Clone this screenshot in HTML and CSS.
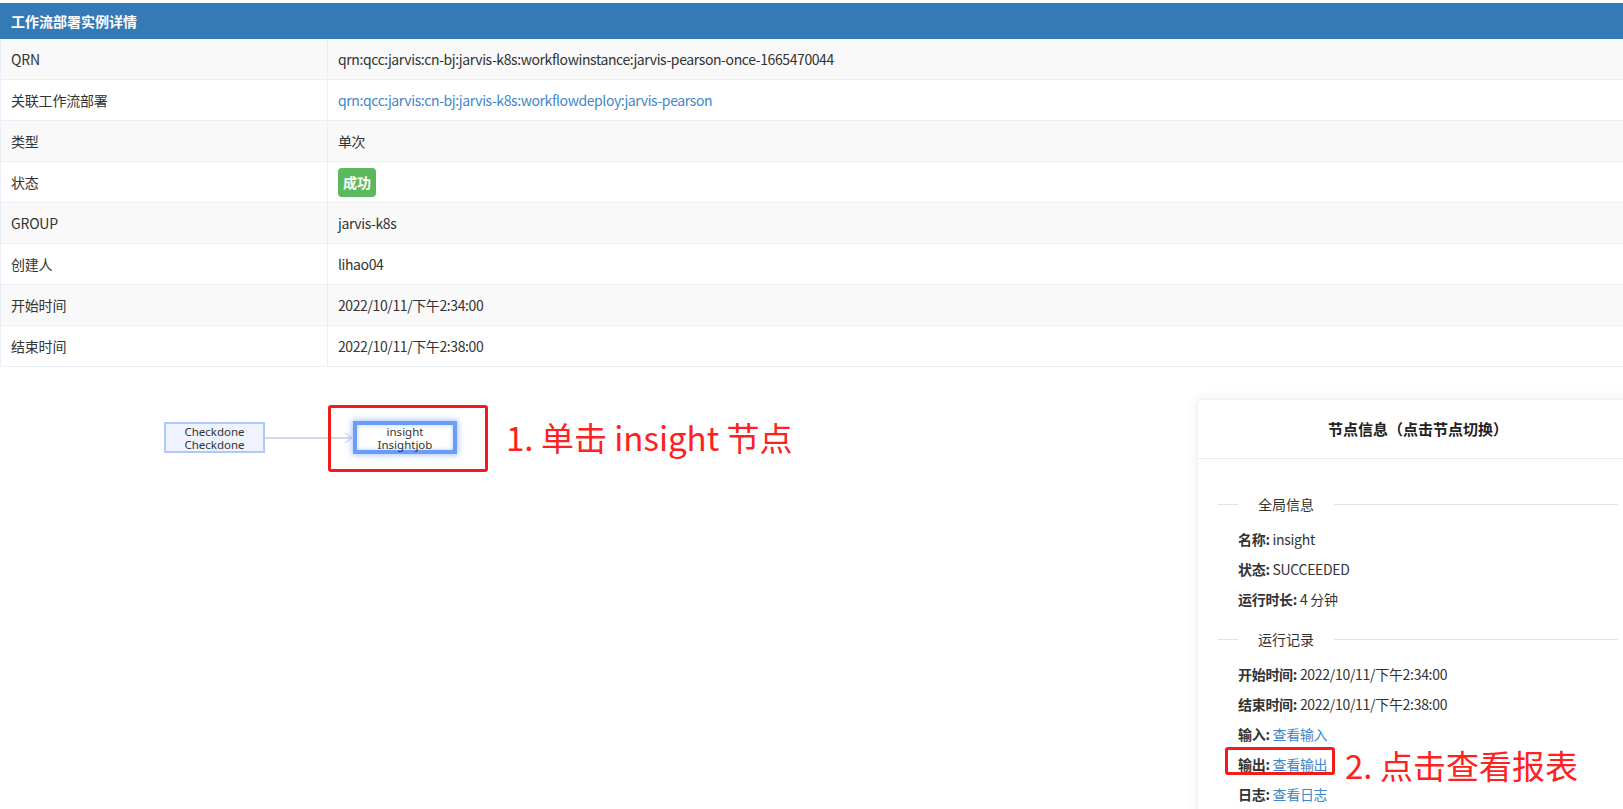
FILE: index.html
```html
<!DOCTYPE html>
<html lang="zh-CN">
<head>
<meta charset="utf-8">
<title>工作流部署实例详情</title>
<link rel="stylesheet" href="styles.css">
</head>
<body>
<div class="panel">
  <div class="panel-heading">工作流部署实例详情</div>
  <div class="detail">
    <div class="row odd"><div class="label">QRN</div><div class="value">qrn:qcc:jarvis:cn-bj:jarvis-k8s:workflowinstance:jarvis-pearson-once-1665470044</div></div>
    <div class="row"><div class="label">关联工作流部署</div><div class="value"><a class="link" href="#">qrn:qcc:jarvis:cn-bj:jarvis-k8s:workflowdeploy:jarvis-pearson</a></div></div>
    <div class="row odd"><div class="label">类型</div><div class="value">单次</div></div>
    <div class="row"><div class="label">状态</div><div class="value"><span class="badge">成功</span></div></div>
    <div class="row odd"><div class="label">GROUP</div><div class="value">jarvis-k8s</div></div>
    <div class="row"><div class="label">创建人</div><div class="value">lihao04</div></div>
    <div class="row odd"><div class="label">开始时间</div><div class="value">2022/10/11/下午2:34:00</div></div>
    <div class="row"><div class="label">结束时间</div><div class="value">2022/10/11/下午2:38:00</div></div>
  </div>
</div>

<div class="lower">
  <div class="graph">
    <svg class="edge" width="100" height="20" viewBox="0 0 100 20">
      <line x1="0" y1="10" x2="87" y2="10" stroke="#d3d9e6" stroke-width="2"/>
      <polyline points="80,5 87,10 80,15" fill="none" stroke="#d3d9e6" stroke-width="1.5"/>
    </svg>
    <div class="node node-check"><span class="node-line">Checkdone</span><span class="node-line">Checkdone</span></div>
    <div class="node node-insight"><span class="node-line">insight</span><span class="node-line">Insightjob</span></div>
    <div class="anno-box anno-box-1"></div>
    <div class="anno-text anno-text-1">1. 单击 insight 节点</div>
  </div>

  <div class="card">
    <div class="card-head">节点信息（点击节点切换）</div>
    <div class="card-body">
      <div class="divider"><span class="divider-text">全局信息</span></div>
      <div class="item"><b>名称:</b> insight</div>
      <div class="item"><b>状态:</b> SUCCEEDED</div>
      <div class="item"><b>运行时长:</b> 4 分钟</div>
      <div class="divider divider-second"><span class="divider-text">运行记录</span></div>
      <div class="item"><b>开始时间:</b> 2022/10/11/下午2:34:00</div>
      <div class="item"><b>结束时间:</b> 2022/10/11/下午2:38:00</div>
      <div class="item"><b>输入:</b> <a class="link" href="#">查看输入</a></div>
      <div class="item item-anno"><b>输出:</b> <a class="link" href="#">查看输出</a>
        <div class="anno-box anno-box-2"></div>
        <div class="anno-text anno-text-2">2. 点击查看报表</div>
      </div>
      <div class="item"><b>日志:</b> <a class="link" href="#">查看日志</a></div>
      <div class="item">&nbsp;</div>
    </div>
  </div>
</div>
</body>
</html>
```

FILE: styles.css
```css
html, body {
  margin: 0;
  padding: 0;
  overflow: hidden;
  background: #ffffff;
}
body {
  font-family: "Noto Sans CJK SC", "Noto Sans", sans-serif;
  font-size: 14px;
  color: #333333;
  height: 809px;
}
.panel {
  margin-top: 3px;
}
.panel-heading {
  height: 36px;
  line-height: 36px;
  background: #337ab7;
  color: #ffffff;
  font-weight: bold;
  font-size: 14px;
  padding-left: 11px;
}
.detail {
  border-left: 1px solid #eceef5;
}
.row {
  display: grid;
  grid-template-columns: 327px 1fr;
  height: 40px;
  border-bottom: 1px solid #eceef5;
  background: #ffffff;
}
.row.odd {
  background: #f9f9f9;
}
.label {
  border-right: 1px solid #eceef5;
  padding-left: 10px;
  display: flex;
  align-items: center;
  letter-spacing: -0.2px;
}
.value {
  padding-left: 10px;
  display: flex;
  align-items: center;
  letter-spacing: -0.4px;
}
.link {
  color: #3f86cc;
  text-decoration: none;
}
.badge {
  display: inline-block;
  height: 29px;
  line-height: 29px;
  padding: 0 5px;
  border-radius: 4px;
  background: #5cb85c;
  color: #ffffff;
  font-weight: bold;
  letter-spacing: 0;
}

.lower {
  display: flex;
  margin-right: -16px;
  align-items: flex-start;
}
.graph {
  flex: 1;
  position: relative;
  height: 442px;
}
.node {
  position: absolute;
  box-sizing: border-box;
  text-align: center;
  font-family: "Noto Sans", "Open Sans", sans-serif;
  font-size: 11.5px;
  color: #333333;
  display: flex;
  flex-direction: column;
  align-items: center;
  justify-content: center;
}
.node-line {
  display: block;
  height: 13px;
  line-height: 13px;
}
.node-check {
  left: 164px;
  top: 55px;
  width: 101px;
  height: 31px;
  background: #eef3fe;
  border: 2px solid #adc8fb;
}
.node-insight {
  left: 353px;
  top: 54px;
  width: 104px;
  height: 33px;
  background: #ffffff;
  border: 4px solid #6b9cf9;
  box-shadow: 0 0 6px 1px rgba(107, 156, 249, 0.6), inset 0 0 4px rgba(107, 156, 249, 0.5);
}
.edge {
  position: absolute;
  left: 265px;
  top: 61px;
}
.anno-box {
  position: absolute;
  box-sizing: border-box;
  border: 3px solid #f01d1b;
  border-radius: 3px;
}
.anno-box-1 {
  left: 328px;
  top: 38px;
  width: 160px;
  height: 67px;
}
.anno-text {
  position: absolute;
  color: #ff2121;
  font-size: 33px;
  line-height: 38px;
  white-space: nowrap;
}
.anno-text-1 {
  left: 506px;
  top: 51px;
}

.card {
  width: 442px;
  margin-top: 32px;
  background: #ffffff;
  border-radius: 4px;
  box-shadow: 0 0 12px rgba(40, 50, 90, 0.09);
  border: 1px solid #f0f1f5;
  box-sizing: border-box;
}
.card-head {
  height: 58px;
  line-height: 58px;
  text-align: center;
  font-size: 15px;
  font-weight: bold;
  color: #222222;
  border-bottom: 1px solid #e8eaf0;
}
.card-body {
  padding: 34px 20px 20px 20px;
}
.divider {
  display: flex;
  align-items: center;
  height: 22px;
  margin-bottom: 9px;
}
.divider::before {
  content: "";
  width: 20px;
  height: 1px;
  background: #e1e3ea;
}
.divider::after {
  content: "";
  flex: 1;
  height: 1px;
  background: #e1e3ea;
}
.divider-text {
  padding: 0 20px;
  color: #333333;
}
.divider-second {
  margin-top: 14px;
}
.item {
  height: 30px;
  line-height: 30px;
  padding-left: 20px;
  color: #333333;
  letter-spacing: -0.3px;
}
.item b {
  font-weight: bold;
}
.item-anno {
  position: relative;
}
.anno-box-2 {
  left: 7px;
  top: -2px;
  width: 110px;
  height: 28px;
}
.anno-text-2 {
  left: 127px;
  top: -3px;
  letter-spacing: 0;
}
```
